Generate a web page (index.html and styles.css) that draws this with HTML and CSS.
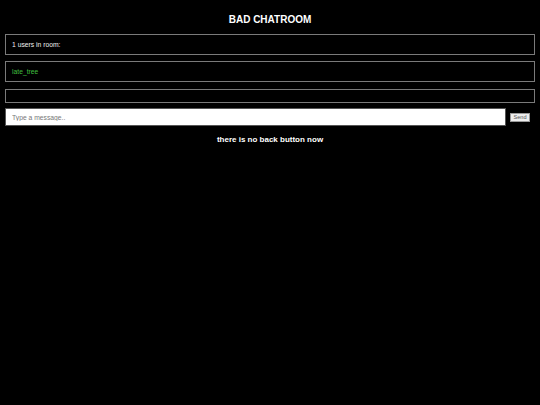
FILE: index.html
```html
<!DOCTYPE html>
<html>
<head>
<meta charset="utf-8">
<title>BAD CHATROOM</title>
<link rel="stylesheet" href="styles.css">
</head>
<body>
<h1 class="title">BAD CHATROOM</h1>
<div class="box">1 users in room:</div>
<div class="box"><span class="user">late_tree</span></div>
<div class="box box-empty"></div>
<form class="send-row" onsubmit="return false">
  <input class="msg" type="text" placeholder="Type a message..">
  <button class="send" type="button">Send</button>
</form>
<h3 class="note">there is no back button now</h3>
</body>
</html>
```
FILE: styles.css
```css
html, body {
  background: #000;
}
body {
  margin: 0;
  padding: 0 5px;
  color: #fff;
  font-family: "Liberation Sans", Arial, sans-serif;
}
.title {
  margin: 14px 0 8px;
  font-size: 10px;
  line-height: 12px;
  font-weight: bold;
  text-align: center;
}
.box {
  border: 1px solid #7a7a7a;
  padding: 6px 6px;
  font-size: 6.75px;
  line-height: 7px;
  min-height: 7px;
  color: #f0f0f0;
  margin-bottom: 6px;
}
.box-empty {
  min-height: 0;
  height: 0;
  margin-top: 7px;
  margin-bottom: 5px;
}
.user {
  color: #3fbf3f;
}
.send-row {
  display: flex;
  align-items: center;
  margin: 0;
}
.msg {
  flex: 1;
  height: 18px;
  box-sizing: border-box;
  margin: 0;
  border: 1px solid #555;
  background: #fff;
  padding: 0 6px;
  font-family: "Liberation Sans", Arial, sans-serif;
  font-size: 6.75px;
  outline: none;
}
.msg::placeholder {
  color: #777;
}
.send {
  margin: 0 5px 0 4px;
  height: 9px;
  width: 20px;
  padding: 0;
  box-sizing: border-box;
  border: 1px solid #999;
  background: #eee;
  color: #555;
  font-family: "Liberation Sans", Arial, sans-serif;
  font-size: 5.6px;
  line-height: 7px;
}
.note {
  margin: 9px 0 0;
  font-size: 8px;
  line-height: 10px;
  font-weight: bold;
  text-align: center;
}
```
